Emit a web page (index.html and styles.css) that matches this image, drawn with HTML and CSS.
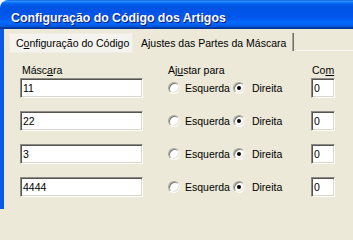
FILE: index.html
```html
<!DOCTYPE html>
<html lang="pt">
<head>
<meta charset="utf-8">
<title>Configuração do Código dos Artigos</title>
<link rel="stylesheet" href="styles.css">
</head>
<body>
<div class="window">
  <div class="titlebar"><span class="title">Configuração do Código dos Artigos</span></div>
  <div class="client">
    <div class="tabs">
      <div class="tab tab-first">C<u>o</u>nfiguração do Código</div>
      <div class="tab tab-second">A<u>j</u>ustes das Partes da Máscara</div>
      <div class="tab-fill"></div>
    </div>
    <div class="panel">
      <div class="row header">
        <div class="col-mask lbl-mask">Másc<u>a</u>ra</div>
        <div class="col-align">Aj<u>u</u>star para</div>
        <div class="col-com lbl-com">Co<u>m</u></div>
      </div>
      <div class="rows">
        <div class="row">
          <div class="col-mask"><input class="field" type="text" value="11"></div>
          <div class="col-align radios">
            <span class="opt"><span class="radio"></span>Esquerda</span>
            <span class="opt"><span class="radio checked"></span>Direita</span>
          </div>
          <div class="col-com"><input class="field" type="text" value="0"></div>
        </div>
        <div class="row">
          <div class="col-mask"><input class="field" type="text" value="22"></div>
          <div class="col-align radios">
            <span class="opt"><span class="radio"></span>Esquerda</span>
            <span class="opt"><span class="radio checked"></span>Direita</span>
          </div>
          <div class="col-com"><input class="field" type="text" value="0"></div>
        </div>
        <div class="row">
          <div class="col-mask"><input class="field" type="text" value="3"></div>
          <div class="col-align radios">
            <span class="opt"><span class="radio"></span>Esquerda</span>
            <span class="opt"><span class="radio checked"></span>Direita</span>
          </div>
          <div class="col-com"><input class="field" type="text" value="0"></div>
        </div>
        <div class="row">
          <div class="col-mask"><input class="field" type="text" value="4444"></div>
          <div class="col-align radios">
            <span class="opt"><span class="radio"></span>Esquerda</span>
            <span class="opt"><span class="radio checked"></span>Direita</span>
          </div>
          <div class="col-com"><input class="field" type="text" value="0"></div>
        </div>
      </div>
    </div>
  </div>
</div>
</body>
</html>
```
FILE: styles.css
```css
html {
  margin: 0;
  padding: 0;
  background: #ECE9D8;
}
body {
  margin: 0;
  padding: 0;
  width: 353px;
  height: 209px;
  overflow: hidden;
  font-family: "Liberation Sans", Arial, sans-serif;
  font-size: 10.5px;
  color: #000;
  background: #ffffff;
}
.window {
  width: 353px;
  height: 209px;
  display: flex;
  flex-direction: column;
}
.titlebar {
  flex: none;
  height: 29px;
  box-sizing: border-box;
  padding: 9px 0 0 11px;
  line-height: 18px;
  border-top-left-radius: 8px;
  background: linear-gradient(to bottom, #0058EE 0%, #3593FF 4%, #288EFF 6%, #127DFF 8%, #036FFC 10%, #0262EE 14%, #0057E5 20%, #0054E3 24%, #0055EB 56%, #005BF5 66%, #026AFE 76%, #0062EF 86%, #0052D6 92%, #0040AB 94%, #003092 100%);
}
.title {
  color: #fff;
  font-weight: bold;
  font-size: 12.3px;
  text-shadow: 1px 1px 0 #0A1883;
  white-space: nowrap;
}
.client {
  flex: 1;
  border-left: 4px solid #0A5AEA;
  background: #ECE9D8;
  display: flex;
  flex-direction: column;
}
.tabs {
  display: flex;
  height: 18px;
  margin-top: 4px;
  position: relative;
  z-index: 1;
}
.tab {
  box-sizing: border-box;
  padding-top: 4px;
  line-height: 13px;
  white-space: nowrap;
}
.tab-first {
  margin-left: 5px;
  width: 124px;
  height: 20px;
  padding-left: 7px;
  background: #F4F3EE;
  box-shadow: inset 0 0 0 1px #EFEDE4;
}
.tab-second {
  width: 160px;
  height: 18px;
  padding-left: 8px;
  border-right: 1px solid #A8A69C;
  box-shadow: 1px 0 0 #6E6C64;
}
.tab-fill {
  flex: 1;
  height: 17px;
  border-bottom: 1px solid #F8F7F2;
  margin-left: 1px;
}
.panel {
  padding: 13px 0 0 16px;
}
.row {
  display: flex;
  align-items: center;
}
.header {
  height: 13px;
  line-height: 13px;
  margin-bottom: 1px;
}
.rows {
  display: flex;
  flex-direction: column;
  gap: 13px;
}
.rows .row {
  height: 20px;
}
.col-mask {
  width: 123px;
}
.col-align {
  width: 143px;
  margin-left: 25px;
}
.col-com {
  width: 24px;
}
.lbl-mask {
  padding-left: 2px;
  box-sizing: border-box;
}
.lbl-com {
  padding-left: 1px;
  box-sizing: border-box;
}
.field {
  display: block;
  width: 100%;
  height: 20px;
  box-sizing: border-box;
  margin: 0;
  padding: 0 2px;
  font-family: "Liberation Sans", Arial, sans-serif;
  font-size: 10.5px;
  color: #000;
  background: #fff;
  border: 1px solid;
  border-color: #8E8C86 #FFFFFF #FFFFFF #8E8C86;
  box-shadow: inset 1px 1px 0 #55544F, inset -1px -1px 0 #DCD9CC;
  outline: none;
}
.radios {
  display: flex;
  align-items: center;
  gap: 3px;
  white-space: nowrap;
}
.opt {
  display: inline-flex;
  align-items: center;
}
.radio {
  width: 12px;
  height: 12px;
  box-sizing: border-box;
  border-radius: 50%;
  background: #fff;
  border: 1px solid;
  border-color: #A9A79E #F4F3EE #FFFFFF #A9A79E;
  box-shadow: inset 1px 1px 0 #7C7B74, inset -1px -1px 0 #E6E3D7;
  margin-right: 5px;
  position: relative;
}
.opt + .opt .radio {
  margin-right: 7px;
}
.radio.checked::after {
  content: "";
  position: absolute;
  left: 3px;
  top: 3px;
  width: 4px;
  height: 4px;
  border-radius: 50%;
  background: #000;
}
```
